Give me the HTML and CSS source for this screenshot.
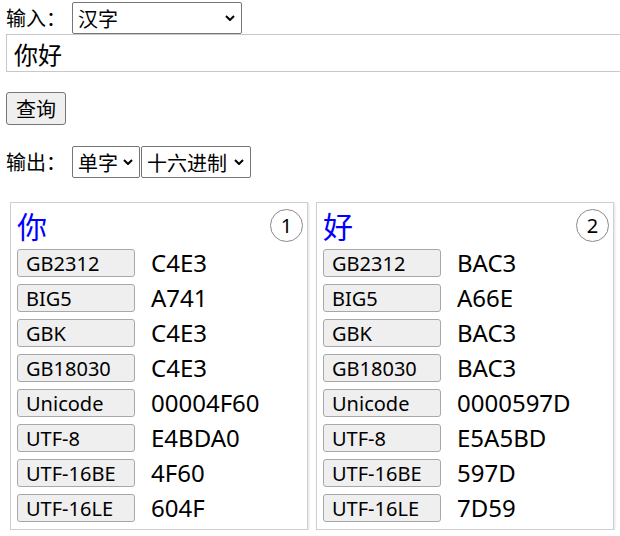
FILE: index.html
```html
<!DOCTYPE html>
<html lang="zh-CN">
<head>
<meta charset="utf-8">
<title>汉字编码查询</title>
<link rel="stylesheet" href="styles.css">
</head>
<body>
<div class="page">
  <div class="line">
    <span class="lbl">输入：</span>
    <span class="sw sw-in">
      <select class="sel"><option>汉字</option></select>
      <svg class="chev" width="10" height="6" viewBox="0 0 10 6"><path d="M1 1 L5 5 L9 1" fill="none" stroke="#000" stroke-width="2"/></svg>
    </span>
  </div>
  <input class="txt" type="text" value="你好">
  <div class="btn-row"><button class="btn">查询</button></div>
  <div class="line out-line">
    <span class="lbl">输出：</span>
    <span class="sw sw-a">
      <select class="sel"><option>单字</option></select>
      <svg class="chev" width="10" height="6" viewBox="0 0 10 6"><path d="M1 1 L5 5 L9 1" fill="none" stroke="#000" stroke-width="2"/></svg>
    </span>
    <span class="sw sw-b">
      <select class="sel"><option>十六进制</option></select>
      <svg class="chev" width="10" height="6" viewBox="0 0 10 6"><path d="M1 1 L5 5 L9 1" fill="none" stroke="#000" stroke-width="2"/></svg>
    </span>
  </div>
  <div class="cards">
    <div class="card">
      <div class="head"><span class="ch">你</span><span class="num">1</span></div>
      <div class="rows">
        <div class="row"><span class="tag">GB2312</span><span class="val">C4E3</span></div>
        <div class="row"><span class="tag">BIG5</span><span class="val">A741</span></div>
        <div class="row"><span class="tag">GBK</span><span class="val">C4E3</span></div>
        <div class="row"><span class="tag">GB18030</span><span class="val">C4E3</span></div>
        <div class="row"><span class="tag">Unicode</span><span class="val">00004F60</span></div>
        <div class="row"><span class="tag">UTF-8</span><span class="val">E4BDA0</span></div>
        <div class="row"><span class="tag">UTF-16BE</span><span class="val">4F60</span></div>
        <div class="row"><span class="tag">UTF-16LE</span><span class="val">604F</span></div>
      </div>
    </div>
    <div class="card">
      <div class="head"><span class="ch">好</span><span class="num">2</span></div>
      <div class="rows">
        <div class="row"><span class="tag">GB2312</span><span class="val">BAC3</span></div>
        <div class="row"><span class="tag">BIG5</span><span class="val">A66E</span></div>
        <div class="row"><span class="tag">GBK</span><span class="val">BAC3</span></div>
        <div class="row"><span class="tag">GB18030</span><span class="val">BAC3</span></div>
        <div class="row"><span class="tag">Unicode</span><span class="val">0000597D</span></div>
        <div class="row"><span class="tag">UTF-8</span><span class="val">E5A5BD</span></div>
        <div class="row"><span class="tag">UTF-16BE</span><span class="val">597D</span></div>
        <div class="row"><span class="tag">UTF-16LE</span><span class="val">7D59</span></div>
      </div>
    </div>
  </div>
</div>
</body>
</html>
```
FILE: styles.css
```css
html, body {
  margin: 0;
  padding: 0;
  background: #fff;
  overflow: hidden;
}
body {
  font-family: "Noto Sans", "Noto Sans CJK SC", sans-serif;
  color: #000;
  font-size: 18px;
}
.page {
  padding: 2px 0 0 6px;
}
.line {
  display: flex;
  align-items: center;
  height: 32px;
}
.lbl {
  width: 66px;
  font-family: "Noto Sans CJK SC", sans-serif;
  font-size: 20px;
  line-height: 32px;
}
.sw {
  position: relative;
  display: block;
  height: 32px;
}
.sw-in { width: 170px; }
.sw-a { width: 68px; margin-right: 1px; }
.sw-b { width: 110px; }
.sel {
  -webkit-appearance: none;
  appearance: none;
  display: block;
  box-sizing: border-box;
  width: 100%;
  height: 32px;
  font-family: "Noto Sans CJK SC", sans-serif;
  font-size: 20px;
  color: #000;
  background: #fff;
  border: 1px solid #767676;
  border-radius: 2px;
  padding: 0 18px 0 5px;
  margin: 0;
  outline: none;
}
.chev {
  position: absolute;
  right: 7px;
  top: 13px;
  pointer-events: none;
}
.txt {
  display: block;
  box-sizing: border-box;
  width: 640px;
  height: 38px;
  margin: 0;
  border: 1px solid #c8c8c8;
  padding: 0 7px;
  font-family: "Noto Sans CJK SC", sans-serif;
  font-size: 24px;
  color: #000;
  outline: none;
}
.btn-row {
  margin-top: 20px;
  height: 33px;
}
.btn {
  box-sizing: border-box;
  width: 60px;
  height: 33px;
  margin: 0;
  padding: 0;
  font-family: "Noto Sans CJK SC", sans-serif;
  font-size: 20px;
  color: #000;
  background: #efefef;
  border: 1px solid #767676;
  border-radius: 3px;
}
.out-line {
  margin-top: 21px;
}
.cards {
  display: flex;
  gap: 8px;
  margin: 24px 0 0 4px;
}
.card {
  box-sizing: border-box;
  width: 298px;
  border: 1px solid #cfcfcf;
  box-shadow: 1px 1px 2px rgba(0, 0, 0, 0.12);
  padding: 6px 4px 7px 6px;
}
.head {
  display: flex;
  justify-content: space-between;
  align-items: center;
  height: 33px;
  margin-bottom: 7px;
}
.ch {
  font-family: "Noto Sans CJK SC", sans-serif;
  font-size: 30px;
  line-height: 33px;
  color: #0000ff;
}
.num {
  box-sizing: border-box;
  width: 33px;
  height: 33px;
  border: 1px solid #8a8a8a;
  border-radius: 50%;
  display: flex;
  align-items: center;
  justify-content: center;
  font-size: 20px;
}
.rows {
  display: flex;
  flex-direction: column;
  gap: 7px;
}
.row {
  display: flex;
  align-items: center;
  height: 28px;
}
.tag {
  box-sizing: border-box;
  width: 118px;
  height: 28px;
  padding-left: 8px;
  background: #efefef;
  border: 1px solid #a8a8a8;
  border-radius: 3px;
  font-size: 20px;
  line-height: 27px;
  white-space: nowrap;
}
.val {
  margin-left: 16px;
  font-size: 24px;
  line-height: 28px;
}
```
